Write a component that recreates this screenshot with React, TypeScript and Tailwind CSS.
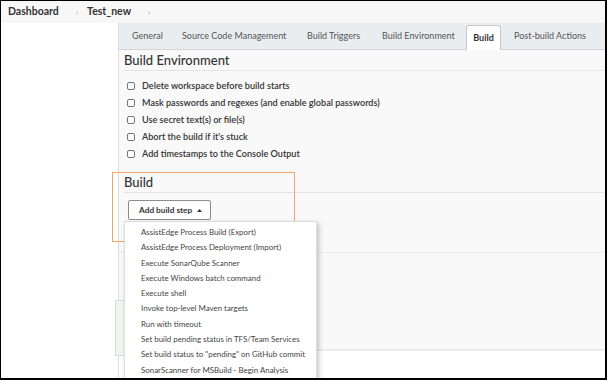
import React from "react"

const tabs = [
  { label: "General", w: "w-[50px]" },
  { label: "Source Code Management", w: "w-[125px]" },
  { label: "Build Triggers", w: "w-[75px]" },
  { label: "Build Environment", w: "w-[94px]" },
]

const envOptions = [
  "Delete workspace before build starts",
  "Mask passwords and regexes (and enable global passwords)",
  "Use secret text(s) or file(s)",
  "Abort the build if it's stuck",
  "Add timestamps to the Console Output",
]

const buildSteps = [
  "AssistEdge Process Build (Export)",
  "AssistEdge Process Deployment (Import)",
  "Execute SonarQube Scanner",
  "Execute Windows batch command",
  "Execute shell",
  "Invoke top-level Maven targets",
  "Run with timeout",
  "Set build pending status in TFS/Team Services",
  'Set build status to "pending" on GitHub commit',
  "SonarScanner for MSBuild - Begin Analysis",
]

function Separator() {
  return <span className="pl-[17px] pr-[9px] text-[8px] text-[#b5b5b5]">›</span>
}

export default function App() {
  return (
    <div className="relative flex h-[380px] w-[607px] flex-col overflow-hidden whitespace-nowrap border-b-2 border-l border-r-2 border-t border-black bg-white font-['Lato',sans-serif] text-[#333]">
      {/* breadcrumb */}
      <div className="flex h-[22px] shrink-0 items-center bg-[#f7f7f7] pl-[7px] text-[10.5px] font-bold text-[#333]">
        <span>Dashboard</span>
        <Separator />
        <span>Test_new</span>
        <Separator />
      </div>

      <div className="flex flex-1">
        <div className="w-[117px] shrink-0" />
        <div className="flex flex-1 flex-col border-l border-[#dcdcdc] bg-[#f9f9f9]">
          {/* tabs */}
          <div className="flex h-[27px] shrink-0 items-end border-b border-[#cfd4d8] bg-[#e9edf0] pl-[3px] text-[9px] text-[#555]">
            {tabs.map((t) => (
              <div key={t.label} className={`${t.w} flex h-[26px] items-center pl-[10px]`}>
                {t.label}
              </div>
            ))}
            <div className="-mb-px flex h-[25px] w-[35px] items-center justify-center rounded-t-[3px] border border-b-0 border-[#c3c8cd] bg-white font-bold text-[#333]">
              Build
            </div>
            <div className="flex h-[26px] items-center pl-[13px]">Post-build Actions</div>
          </div>

          {/* build environment */}
          <div className="ml-[5px] flex h-[21px] items-center border-b border-[#e4e4e4] pt-px text-[13px] font-medium text-[#333]">
            Build Environment
          </div>
          <div className="mt-[6px] flex flex-col">
            {envOptions.map((o) => (
              <div key={o} className="flex h-[17px] items-center pl-[8px] text-[9.1px] font-semibold text-[#333]">
                <span className="mr-[7px] h-[8px] w-[8px] rounded-[2px] border border-[#767676] bg-white" />
                {o}
              </div>
            ))}
          </div>

          {/* build */}
          <div className="ml-[5px] mt-[11px] flex h-[20px] items-center border-b border-[#e4e4e4] pt-px text-[13px] font-medium text-[#333]">
            Build
          </div>
          <div className="ml-[9px] mt-[7px] flex h-[20px] w-[83px] items-center rounded-[2px] border border-[#8c8c8c] bg-white pl-[10px] text-[8.3px] font-bold text-[#333]">
            Add build step
            <svg className="ml-[5px]" width="5" height="3" viewBox="0 0 5 3">
              <path d="M0 3 L2.5 0 L5 3 Z" fill="#333" />
            </svg>
          </div>
          <div className="h-[33px] border-b border-[#ececec]" />
          <div className="h-[98px] border-b-2 border-[#ececec]" />
          <div className="flex-1 bg-white" />
        </div>
      </div>

      {/* highlight box */}
      <div className="absolute left-[111px] top-[171px] h-[70px] w-[183px] border border-[#f4a46c]" />

      {/* item peeking behind panel */}
      <div className="absolute left-[114px] top-[299px] h-[56px] w-[10px] border border-[#cfe2cf] bg-[#f1f5f0]" />

      {/* dropdown */}
      <div className="absolute left-[123px] top-[220px] w-[193px] border border-[#dedede] bg-white pt-[3px] shadow-[2px_2px_5px_rgba(0,0,0,0.22)]">
        {buildSteps.map((s) => (
          <div key={s} className="h-[15.3px] pl-[16px] text-[7.9px] leading-[15.3px] text-[#444]">
            {s}
          </div>
        ))}
        <div className="h-[10px]" />
      </div>
    </div>
  )
}
